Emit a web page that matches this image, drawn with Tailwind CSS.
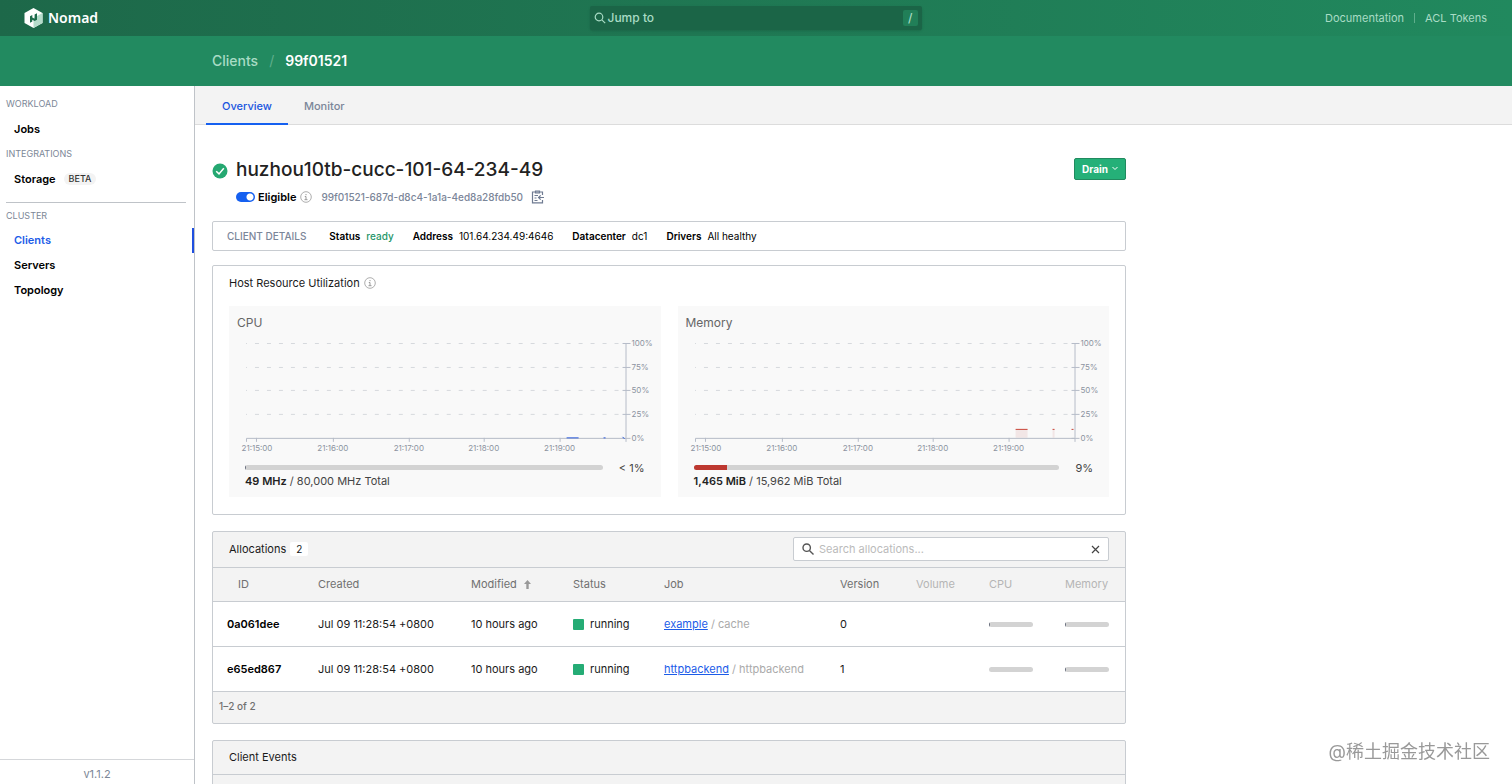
<!DOCTYPE html>
<html lang="en">
  <head>
    <meta charset="UTF-8" />
    <meta name="viewport" content="width=device-width, initial-scale=1.0" />
    <title>Client 99f01521 - Nomad</title>
    <script src="https://cdn.jsdelivr.net/npm/@tailwindcss/browser@4"></script>
  </head>

  <body
    class="flex h-screen flex-col overflow-hidden bg-white font-['Inter','Noto_Sans_CJK_SC',sans-serif] text-[11px] leading-4 text-[#1a1a1a]"
  >
    <header class="shrink-0 text-[#a9dcc5]">
      <nav
        class="grid h-9 grid-cols-[1fr_332px_1fr] items-center bg-linear-to-r from-[#1d6849] to-[#21895e] pr-[25px] pb-px pl-6"
      >
        <a href="#" class="flex items-center gap-[5px] text-[14px] font-semibold text-white">
          <svg class="h-5 w-[19px]" viewBox="0 0 19 20">
            <path d="M9.500 0L18.500 5V15L9.500 20L.500 15V5Z" fill="#fff" />
            <path d="M9.500 10L18.500 5V15L9.500 20Z" fill="#b5dccb" />
            <path d="M6 8.200L8.300 6.900V9.500L10.600 10.700V6.600L13 5.300V11.700L10.700 13L8.300 11.800V13.500L6 14.800Z" fill="#1d6b4b" />
          </svg>
          <span class="font-['Noto_Sans',sans-serif]">Nomad</span>
        </a>
        <button
          class="flex h-6 items-center rounded-xs bg-[#1b6547] pr-1 pl-1 text-[12px] font-medium shadow-sm"
        >
          <svg class="mr-[2px] size-3" viewBox="0 0 12 12" fill="none" stroke="currentColor" stroke-width="1.200">
            <circle cx="5" cy="5" r="3.800" />
            <path d="M7.800 7.800L11.200 11.200" />
          </svg>
          Jump to
          <span class="ml-auto rounded-xs bg-[#217f58] px-[5px] leading-4">/</span>
        </button>
        <div class="flex items-center justify-end gap-[10px]">
          <a href="#">Documentation</a>
          <span class="h-[10px] w-px bg-[#5fae8c]"></span>
          <a href="#">ACL Tokens</a>
        </div>
      </nav>
      <nav
        class="flex h-[50px] items-center gap-[11px] bg-[#228a60] pl-[212px] text-[14px] font-medium"
        aria-label="Breadcrumb"
      >
        <a href="#">Clients</a>
        <span class="font-normal text-[#5fae8c]">/</span>
        <a href="#" class="font-semibold text-white">99f01521</a>
      </nav>
    </header>

    <div class="flex min-h-0 flex-1">
      <aside class="flex w-[195px] shrink-0 flex-col border-r border-[#bfc3c8]">
        <div class="pt-[10px]">
          <p class="pl-[6px] text-[9px] text-[#7c8797]">WORKLOAD</p>
          <ul class="pt-[5px] font-semibold text-black">
            <li><a href="#" class="block py-1 pl-[14px]">Jobs</a></li>
          </ul>
          <p class="pt-[5px] pl-[6px] text-[9px] text-[#7c8797]">INTEGRATIONS</p>
          <ul class="pt-[5px] font-semibold text-black">
            <li>
              <a href="#" class="flex items-center gap-2 py-1 pl-[14px]">
                Storage
                <span class="rounded-full bg-[#f3f3f3] px-[5px] text-[9px] leading-3 font-medium text-[#333]">BETA</span>
              </a>
            </li>
          </ul>
          <hr class="mt-[11px] mr-2 ml-[6px] border-[#bfc3c8]" />
          <p class="pt-[5px] pl-[6px] text-[9px] text-[#7c8797]">CLUSTER</p>
          <ul class="pt-1 leading-[17px] font-semibold text-black">
            <li>
              <a href="#" class="block border-r-2 border-[#1f4fe0] py-1 pl-[14px] text-[#1c5ce8]">Clients</a>
            </li>
            <li><a href="#" class="block py-1 pl-[14px]">Servers</a></li>
            <li><a href="#" class="block py-1 pl-[14px]">Topology</a></li>
          </ul>
        </div>
        <footer class="mt-auto h-[25px] border-t border-[#d5d7da] pt-[6px] text-center text-[#7c8797]">
          v1.1.2
        </footer>
      </aside>

      <main class="min-w-0 flex-1">
        <div class="flex h-[39px] border-b border-[#dcdcdc] bg-[#f3f3f3] pl-[11px] font-medium">
          <a href="#" class="-mb-px border-b-2 border-[#1560f0] px-4 py-3 leading-4 text-[#1a56e0]">Overview</a>
          <a href="#" class="px-4 py-3 leading-4 text-[#7b8699]">Monitor</a>
        </div>

        <div class="max-w-[931px] pl-[17px]">
          <div class="flex items-start pt-[32px]">
            <svg class="mt-[6px] mr-2 size-4" viewBox="0 0 16 16">
              <circle cx="8" cy="8" r="7.500" fill="#25a871" />
              <path d="M4.200 8.200L7 10.900L11.800 5.300" fill="none" stroke="#fff" stroke-width="1.500" />
            </svg>
            <div>
              <h1 class="text-[19px] leading-[26px] font-medium text-[#222]">huzhou10tb-cucc-101-64-234-49</h1>
              <div class="mt-[6px] flex h-4 items-center">
                <label class="flex items-center gap-[3px] font-semibold text-black">
                  <input
                    type="checkbox"
                    checked
                    class="h-[10px] w-[19px] appearance-none rounded-full bg-[radial-gradient(circle_at_14px_5px,white_3px,#1560f0_4px)]"
                  />
                  Eligible
                </label>
                <svg class="ml-1 size-3 text-[#999]" viewBox="0 0 12 12" fill="none" stroke="currentColor">
                  <circle cx="6" cy="6" r="5.300" stroke-width=".8" />
                  <path d="M6 3V4.200M4.800 5.500H6V8.700M4.500 8.700H7.500" />
                </svg>
                <span class="ml-[9px] text-[10px] font-medium text-[#7b8699]">99f01521-687d-d8c4-1a1a-4ed8a28fdb50</span>
                <button class="ml-2 text-[#6f7b92]" aria-label="Copy">
                  <svg class="size-[14px]" viewBox="0 0 14 14" fill="none" stroke="currentColor" stroke-width="1.200">
                    <path d="M11.500 5V2H1.500V12.800H11.500V10" />
                    <path d="M4.500 1H8.500V3H4.500ZM3.500 5.500H7M3.500 8H5.500M3.500 10.500H6.500M13 7.500H7.500M9.700 5.300L7.500 7.500L9.700 9.700" />
                  </svg>
                </button>
              </div>
            </div>
            <button
              class="mt-px ml-auto flex h-[22px] items-center gap-1 rounded-xs border border-[#218a5f] bg-[#25b078] px-[7px] pb-px text-[10px] font-bold text-white"
            >
              Drain
              <svg class="h-[5px] w-[6px]" viewBox="0 0 6 5" fill="none" stroke="currentColor">
                <path d="M.5 1L3 3.500L5.500 1" />
              </svg>
            </button>
          </div>

          <section
            class="mt-4 flex h-[30px] items-center rounded-xs border border-[#c8ccd1] pl-[14px] text-[10px] text-black"
          >
            <span class="mr-[23px] font-medium text-[#7b8699]">CLIENT DETAILS</span>
            <span class="mr-[19px]"><b class="mr-[6px] font-semibold">Status</b><span class="font-medium text-[#259668]">ready</span></span>
            <span class="mr-[19px]"><b class="mr-[6px] font-semibold">Address</b>101.64.234.49:4646</span>
            <span class="mr-[19px]"><b class="mr-[6px] font-semibold">Datacenter</b>dc1</span>
            <span><b class="mr-[6px] font-semibold">Drivers</b>All healthy</span>
          </section>

          <section class="mt-[14px] rounded-xs border border-[#c8ccd1] px-4 pt-[9px] pb-[17px]">
            <h2 class="flex items-center gap-1">
              Host Resource Utilization
              <svg class="size-3 text-[#999]" viewBox="0 0 12 12" fill="none" stroke="currentColor">
                <circle cx="6" cy="6" r="5.300" stroke-width=".8" />
                <path d="M6 3V4.200M4.800 5.500H6V8.700M4.500 8.700H7.500" />
              </svg>
            </h2>
            <div class="mt-[15px] grid grid-cols-2 gap-[17px]">
              <div class="h-[191px] bg-[#f9f9f9] pt-2">
                <h3 class="pl-2 text-[12px] leading-[17px] text-[#666]">CPU</h3>
                <svg class="w-full" viewBox="0 0 432 128" fill="none" stroke="#b6bcc8">
                  <path d="M17 12.500H397M17 36.500H397M17 59.500H397M17 83.500H397" stroke="#d6d9dd" stroke-dasharray="4 8" stroke-dashoffset="3" />
                  <path d="M17.500 111V107.500H397.500V111M27.500 107V111M104.500 107V111M180.500 107V111M255.500 107V111M331.500 107V111" />
                  <path d="M397.500 12V107M394 12.500H402M394 36.500H402M394 59.500H402M394 83.500H402M394 107.500H402" />
                  <path d="M338 107H350M375 107H377M394 106L396 108" stroke="#2b59dd" />
                  <g fill="#8c93a0" stroke="none" font-size="8">
                    <text x="403" y="15">100%</text>
                    <text x="403" y="39">75%</text>
                    <text x="403" y="62">50%</text>
                    <text x="403" y="86">25%</text>
                    <text x="403" y="110">0%</text>
                    <g text-anchor="middle">
                      <text x="28" y="120">21:15:00</text>
                      <text x="104" y="120">21:16:00</text>
                      <text x="180" y="120">21:17:00</text>
                      <text x="255" y="120">21:18:00</text>
                      <text x="331" y="120">21:19:00</text>
                    </g>
                  </g>
                </svg>
                <div class="flex items-center gap-4 px-4">
                  <div class="h-[5px] flex-1 overflow-hidden rounded-full bg-[#d3d3d3]">
                    <div class="h-full bg-[#6c7280]" style="width: 0.3%"></div>
                  </div>
                  <span class="leading-[18px] text-[#444]">&lt; 1%</span>
                </div>
                <p class="-mt-1 pl-4 text-[#444]"><b class="font-semibold text-[#222]">49 MHz</b> / 80,000 MHz Total</p>
              </div>

              <div class="h-[191px] bg-[#f9f9f9] pt-2">
                <h3 class="pl-2 text-[12px] leading-[17px] text-[#666]">Memory</h3>
                <svg class="w-full" viewBox="0 0 432 128" fill="none" stroke="#b6bcc8">
                  <path d="M17 12.500H397M17 36.500H397M17 59.500H397M17 83.500H397" stroke="#d6d9dd" stroke-dasharray="4 8" stroke-dashoffset="3" />
                  <path d="M338 99H350V107H338ZM375 99H377V107H375Z" fill="#f2e6e6" stroke="none" />
                  <path d="M17.500 111V107.500H397.500V111M27.500 107V111M104.500 107V111M180.500 107V111M255.500 107V111M331.500 107V111" />
                  <path d="M397.500 12V107M394 12.500H402M394 36.500H402M394 59.500H402M394 83.500H402M394 107.500H402" />
                  <path d="M338 98.500H350M375 98.500H377M394 98.500H396" stroke="#c84034" />
                  <g fill="#8c93a0" stroke="none" font-size="8">
                    <text x="403" y="15">100%</text>
                    <text x="403" y="39">75%</text>
                    <text x="403" y="62">50%</text>
                    <text x="403" y="86">25%</text>
                    <text x="403" y="110">0%</text>
                    <g text-anchor="middle">
                      <text x="28" y="120">21:15:00</text>
                      <text x="104" y="120">21:16:00</text>
                      <text x="180" y="120">21:17:00</text>
                      <text x="255" y="120">21:18:00</text>
                      <text x="331" y="120">21:19:00</text>
                    </g>
                  </g>
                </svg>
                <div class="flex items-center gap-4 px-4">
                  <div class="h-[5px] flex-1 overflow-hidden rounded-full bg-[#d3d3d3]">
                    <div class="h-full bg-[#bd3830]" style="width: 9.2%"></div>
                  </div>
                  <span class="leading-[18px] text-[#444]">9%</span>
                </div>
                <p class="-mt-1 pl-4 text-[#444]"><b class="font-semibold text-[#222]">1,465 MiB</b> / 15,962 MiB Total</p>
              </div>
            </div>
          </section>

          <section class="mt-4 rounded-xs border border-[#c8ccd1] bg-[#f3f3f3]">
            <div class="flex h-[35px] items-center px-4 pb-px">
              <h2>Allocations</h2>
              <span class="ml-1 rounded-xs bg-white px-[6px] text-[10px] leading-[14px]">2</span>
              <div class="ml-auto flex h-6 w-[316px] items-center rounded-xs border border-[#c8ccd1] bg-white px-2">
                <svg class="size-3 shrink-0 text-[#555]" viewBox="0 0 12 12" fill="none" stroke="currentColor" stroke-width="1.400">
                  <circle cx="4.700" cy="4.700" r="3.700" />
                  <path d="M7.400 7.400L11.500 11.500" />
                </svg>
                <input
                  type="text"
                  aria-label="Search allocations"
                  placeholder="Search allocations..."
                  class="min-w-0 flex-1 px-[5px] outline-none placeholder:text-[#bbb]"
                />
                <button class="text-[#444]" aria-label="Clear search">
                  <svg class="size-[9px]" viewBox="0 0 9 9" fill="none" stroke="currentColor" stroke-width="1.200">
                    <path d="M1 1L8 8M8 1L1 8" />
                  </svg>
                </button>
              </div>
            </div>
            <table class="w-full table-fixed border-collapse text-left">
              <colgroup>
                <col class="w-[93px]" />
                <col class="w-[153px]" />
                <col class="w-[102px]" />
                <col class="w-[91px]" />
                <col class="w-[176px]" />
                <col class="w-[76px]" />
                <col class="w-[73px]" />
                <col class="w-[76px]" />
                <col class="w-[72px]" />
              </colgroup>
              <thead>
                <tr class="h-[34px] border-y border-[#c8ccd1] text-[#707070]">
                  <th class="pb-px pl-[25px] font-normal">ID</th>
                  <th class="pb-px pl-3 font-normal">Created</th>
                  <th class="pb-px pl-3 font-normal">
                    <span class="flex items-center gap-[7px]">
                      Modified
                      <svg class="h-[9px] w-[7px]" viewBox="0 0 7 9" fill="#999">
                        <path d="M3.500 0L7 4H4.700V9H2.300V4H0Z" />
                      </svg>
                    </span>
                  </th>
                  <th class="pb-px pl-3 font-normal">Status</th>
                  <th class="pb-px pl-3 font-normal">Job</th>
                  <th class="pb-px pl-3 font-normal">Version</th>
                  <th class="pb-px pl-3 font-normal text-[#b5b5b5]">Volume</th>
                  <th class="pb-px pl-3 font-normal text-[#b5b5b5]">CPU</th>
                  <th class="pb-px pl-3 font-normal text-[#b5b5b5]">Memory</th>
                </tr>
              </thead>
              <tbody class="bg-white">
                <tr class="h-[45px] border-b border-[#c8ccd1]">
                  <td class="pl-[14px] font-semibold text-black">0a061dee</td>
                  <td class="pl-3">Jul 09 11:28:54 +0800</td>
                  <td class="pl-3">10 hours ago</td>
                  <td class="pl-3">
                    <span class="flex items-center gap-[6px]"><i class="size-[11px] rounded-[1px] bg-[#25ac75]"></i>running</span>
                  </td>
                  <td class="pl-3 text-[#aaa]"><a href="#" class="text-[#1c5ce8] underline">example</a> / cache</td>
                  <td class="pl-3">0</td>
                  <td></td>
                  <td class="pl-3">
                    <div class="mr-5 h-[5px] overflow-hidden rounded-full bg-[#d3d3d3]">
                      <div class="h-full bg-[#6c7280]" style="width: 2%"></div>
                    </div>
                  </td>
                  <td class="pl-3">
                    <div class="mr-4 h-[5px] overflow-hidden rounded-full bg-[#d3d3d3]">
                      <div class="h-full bg-[#6c7280]" style="width: 2%"></div>
                    </div>
                  </td>
                </tr>
                <tr class="h-[45px] border-b border-[#c8ccd1]">
                  <td class="pl-[14px] font-semibold text-black">e65ed867</td>
                  <td class="pl-3">Jul 09 11:28:54 +0800</td>
                  <td class="pl-3">10 hours ago</td>
                  <td class="pl-3">
                    <span class="flex items-center gap-[6px]"><i class="size-[11px] rounded-[1px] bg-[#25ac75]"></i>running</span>
                  </td>
                  <td class="pl-3 text-[#aaa]"><a href="#" class="text-[#1c5ce8] underline">httpbackend</a> / httpbackend</td>
                  <td class="pl-3">1</td>
                  <td></td>
                  <td class="pl-3">
                    <div class="mr-5 h-[5px] overflow-hidden rounded-full bg-[#d3d3d3]">
                      <div class="h-full bg-[#6c7280]" style="width: 0%"></div>
                    </div>
                  </td>
                  <td class="pl-3">
                    <div class="mr-4 h-[5px] overflow-hidden rounded-full bg-[#d3d3d3]">
                      <div class="h-full bg-[#6c7280]" style="width: 2%"></div>
                    </div>
                  </td>
                </tr>
              </tbody>
            </table>
            <p class="h-[31px] pt-[6px] pl-[6px] text-[10px] font-medium text-[#707070]">1–2 of 2</p>
          </section>

          <section class="mt-4 rounded-xs border border-[#c8ccd1] bg-[#f3f3f3]">
            <h2 class="border-b border-[#c8ccd1] px-4 pt-2 pb-[9px]">Client Events</h2>
            <div class="h-9"></div>
          </section>
        </div>
      </main>
    </div>

    <div class="fixed right-[22px] bottom-5 text-[18px] leading-6 text-[#999]">@稀土掘金技术社区</div>
  </body>
</html>
